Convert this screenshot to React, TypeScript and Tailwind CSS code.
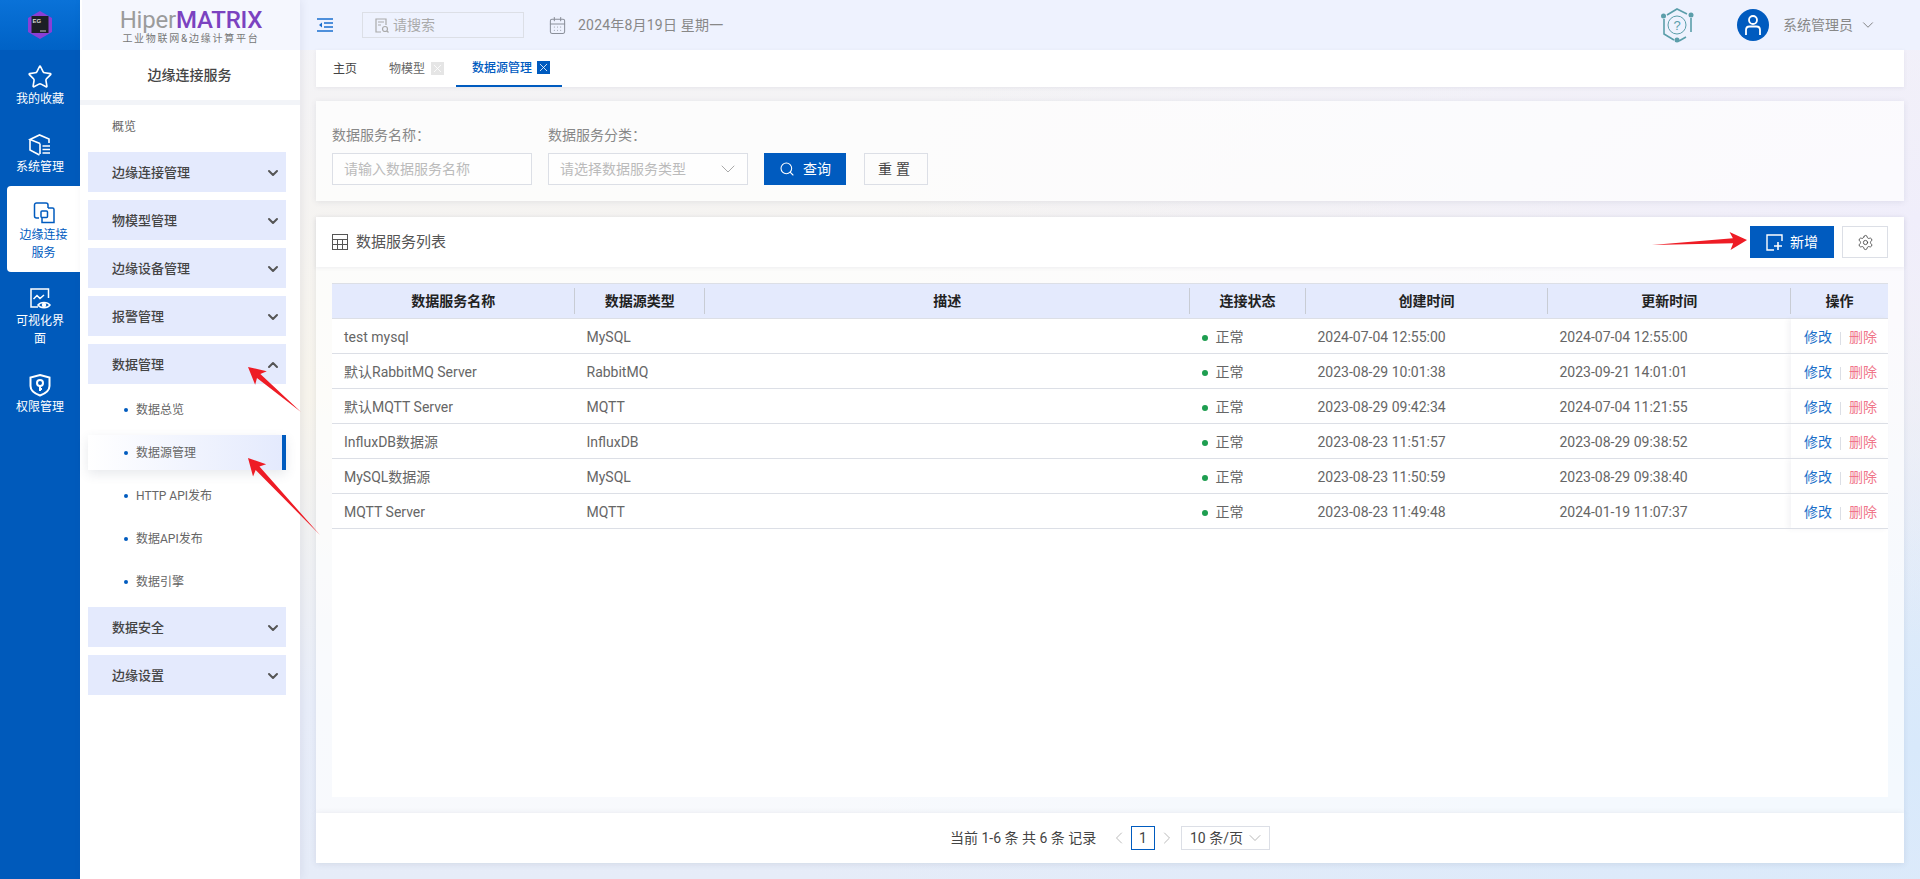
import { CalendarDays, ChevronDown, ChevronLeft, ChevronRight, ChevronUp, Search, Settings, Star, X } from "lucide-react";

const railItems = [
  { label: "我的收藏", icon: "star" },
  { label: "系统管理", icon: "box" },
  { label: "边缘连接服务", icon: "edge", active: true },
  { label: "可视化界面", icon: "screen" },
  { label: "权限管理", icon: "shield" },
];

const dataChildren = ["数据总览", "数据源管理", "HTTP API发布", "数据API发布", "数据引擎"];

const rows = [
  { name: "test mysql", type: "MySQL", created: "2024-07-04 12:55:00", updated: "2024-07-04 12:55:00" },
  { name: "默认RabbitMQ Server", type: "RabbitMQ", created: "2023-08-29 10:01:38", updated: "2023-09-21 14:01:01" },
  { name: "默认MQTT Server", type: "MQTT", created: "2023-08-29 09:42:34", updated: "2024-07-04 11:21:55" },
  { name: "InfluxDB数据源", type: "InfluxDB", created: "2023-08-23 11:51:57", updated: "2023-08-29 09:38:52" },
  { name: "MySQL数据源", type: "MySQL", created: "2023-08-23 11:50:59", updated: "2023-08-29 09:38:40" },
  { name: "MQTT Server", type: "MQTT", created: "2023-08-23 11:49:48", updated: "2024-01-19 11:07:37" },
];

const heads = [
  { label: "数据服务名称", cls: "w-[242.5px]" },
  { label: "数据源类型", cls: "w-[130.5px]" },
  { label: "描述", cls: "w-[484.5px]" },
  { label: "连接状态", cls: "w-[116px]" },
  { label: "创建时间", cls: "w-[242px]" },
  { label: "更新时间", cls: "w-[243.5px]" },
];

function RailIcon({ name }: { name: string }) {
  if (name === "star") return <Star size={26} strokeWidth={1.5} />;
  if (name === "box")
    return (
      <svg width="24" height="24" viewBox="0 0 24 24" fill="none" stroke="currentColor" strokeWidth="1.6">
        <path d="M12 10.5 2 6.5 11.5 2 21 6v4" />
        <path d="M2 6.5V17l9.5 5" />
        <path d="M12 10.5V21" />
        <path d="M14.5 13H22M14.5 16.5H22M14.5 20H22" />
      </svg>
    );
  if (name === "edge")
    return (
      <svg width="24" height="24" viewBox="0 0 24 24" fill="none" stroke="currentColor" strokeWidth="1.5">
        <path d="M7 17H4.5A2 2 0 0 1 2.5 15V4A2 2 0 0 1 4.5 2H14A2 2 0 0 1 16 4V7" />
        <path d="M16 7h4.5A1.5 1.5 0 0 1 22 8.500V21.500H10V17" />
        <rect x="9" y="10" width="6.500" height="6.500" rx="1" />
      </svg>
    );
  if (name === "screen")
    return (
      <svg width="24" height="24" viewBox="0 0 24 24" fill="none" stroke="currentColor" strokeWidth="1.5">
        <path d="M10 20H3V2h17.500v9" />
        <path d="M5.500 12 9 8.500l3 3 4-3.500" />
        <path d="M10 18c2.500-3.500 9.500-3.500 12 0-2.500 3.500-9.500 3.500-12 0Z" />
        <circle cx="16" cy="18" r="1.500" fill="currentColor" />
      </svg>
    );
  return (
    <svg width="24" height="24" viewBox="0 0 24 24" fill="none" stroke="currentColor" strokeWidth="2">
      <path d="M12 2 21.500 4.500V13c0 4.500-4 7.500-9.500 9.500C6.500 20.500 2.500 17.500 2.500 13V4.500Z" />
      <circle cx="12" cy="10" r="3" />
      <path d="M12 13v5M12 16h2" />
    </svg>
  );
}

function Rail() {
  return (
    <aside className="w-20 shrink-0 bg-[#005abb] flex flex-col">
      <div className="h-[50px] bg-gradient-to-b from-[#0a72d8] to-[#0062c6] flex items-center justify-center">
        <svg width="26" height="28" viewBox="0 0 26 28">
          <path d="M13 0 25 7v14l-12 7-12-7V7Z" fill="#8a3fd6" />
          <rect x="4.500" y="5" width="17" height="17" fill="#1c1f26" />
          <text x="5.500" y="12" fontSize="6" fontWeight="700" fill="#d8d8d8" fontFamily="Liberation Sans">EG</text>
          <rect x="13" y="19.500" width="6" height="1" fill="#c8c8c8" />
        </svg>
      </div>
      {railItems.map((item) => (
        <div
          key={item.label}
          className={`flex flex-col items-center pt-[15px] pb-[10px] text-xs leading-[18px] text-center ${
            item.active ? "ml-[7px] bg-white text-[#005bbf] rounded-l-[4px] px-[9px]" : "text-white px-4"
          }`}
        >
          <div className="h-6 flex items-center justify-center">
            <RailIcon name={item.icon} />
          </div>
          <span className="mt-[1px]">{item.label}</span>
        </div>
      ))}
    </aside>
  );
}

function MenuHead({ label, open }: { label: string; open?: boolean }) {
  return (
    <div className="h-10 shrink-0 bg-[#e4eafd] flex items-center justify-between pl-6 pr-[5px] pt-[1px] text-[13px] font-medium text-[#444]">
      <span>{label}</span>
      {open ? <ChevronUp size={16} strokeWidth={3} className="text-[#555]" /> : <ChevronDown size={16} strokeWidth={3} className="text-[#555]" />}
    </div>
  );
}

function Sidebar() {
  return (
    <aside className="w-[220px] shrink-0 bg-white flex flex-col shadow-[2px_0_8px_rgba(60,70,100,0.08)] z-10">
      <div className="h-[50px] bg-[#f5f7fe] flex flex-col items-center justify-center ml-[2px]">
        <div className="text-[24px] leading-[26px] tracking-[-0.2px] mt-[1px]">
          <span className="text-[#9b9b9b]">Hiper</span>
          <span className="text-[#7b42c0] font-medium">MATRIX</span>
        </div>
        <div className="text-[10px] leading-[12px] tracking-[1.75px] text-[#777]">工业物联网&边缘计算平台</div>
      </div>
      <div className="h-[50px] flex items-center justify-center text-sm font-medium text-[#444] ml-[-1px]">边缘连接服务</div>
      <div className="h-[5px] bg-[#f2f4f8]" />
      <div className="flex flex-col gap-2 pl-2 pr-[14px]">
        <div className="h-10 -mb-[3px] mt-[2px] flex items-center pl-6 text-xs text-[#666]">概览</div>
        <MenuHead label="边缘连接管理" />
        <MenuHead label="物模型管理" />
        <MenuHead label="边缘设备管理" />
        <MenuHead label="报警管理" />
        <MenuHead label="数据管理" open />
        {dataChildren.map((c, idx) => (
          <div
            key={c}
            className={`h-[35px] flex items-center pl-9 pt-[1px] text-xs text-[#666] ${
              idx === 1
                ? "bg-gradient-to-r from-white to-[#e4eafd] border-r-4 border-[#005bbf] shadow-[0_4px_12px_rgba(60,70,100,0.12)] text-[#555]"
                : ""
            }`}
          >
            <span className="w-1 h-1 rounded-full bg-[#005bbf] mr-[8px]" />
            {c}
          </div>
        ))}
        <MenuHead label="数据安全" />
        <MenuHead label="边缘设置" />
      </div>
    </aside>
  );
}

function Topbar() {
  return (
    <header className="h-[50px] shrink-0 bg-[#eef2fe] flex items-center pl-[17px] pr-[43px]">
      <svg width="16" height="14" viewBox="0 0 16 14" fill="none" stroke="#1a6fd0" strokeWidth="1.3">
        <path d="M0 1h16M7 5h9M7 9h9M0 13h16" />
        <path d="M5 4.500 2 7l3 2.500Z" fill="#1a6fd0" stroke="none" />
      </svg>
      <div className="ml-[29px] w-[162px] h-[26px] border border-[#dcdfe6] flex items-center pl-[12px] text-sm text-[#aaa]">
        <svg width="14" height="15" viewBox="0 0 14 15" fill="none" stroke="#aaa" strokeWidth="1.2" className="mr-[4px]">
          <path d="M6 14H1V1h10v6" />
          <path d="M3 4h6M3 7h3" />
          <circle cx="10" cy="11" r="2.500" />
          <path d="m12 13 1.500 1.500" />
        </svg>
        请搜索
      </div>
      <CalendarDays size={19} strokeWidth={1.3} className="ml-[24px] text-[#8a8f99]" />
      <span className="ml-[11px] text-sm text-[#888] tracking-[0.2px]">2024年8月19日 星期一</span>
      <svg width="34" height="36" viewBox="0 0 34 36" fill="none" stroke="#5b9eaa" strokeWidth="1.6" className="ml-auto">
        <path d="M7 8 17 2l10 5M31 11v14M26 30l-7 4M14 33 4 27V12" />
        <circle cx="17" cy="18" r="9" strokeWidth="1" />
        <circle cx="3.500" cy="9" r="2.500" fill="#5b9eaa" stroke="none" />
        <circle cx="31" cy="8" r="2.500" fill="#5b9eaa" stroke="none" />
        <circle cx="17" cy="33" r="2.500" fill="#5b9eaa" stroke="none" />
        <text x="17" y="23" fontSize="13" textAnchor="middle" fill="#5b9eaa" stroke="none" fontFamily="Liberation Sans">?</text>
      </svg>
      <div className="ml-[43px] w-8 h-8 rounded-full bg-[#005bbf] flex items-center justify-center">
        <svg width="20" height="24" viewBox="0 0 20 24" fill="none" stroke="white" strokeWidth="1.8">
          <circle cx="10" cy="7" r="4" />
          <path d="M3 22v-5c0-2 1.500-3.500 3.500-3.500h7c2 0 3.500 1.500 3.500 3.500v5" />
        </svg>
      </div>
      <span className="ml-[14px] text-sm text-[#888] w-[70px] whitespace-nowrap">系统管理员</span>
      <ChevronDown size={18} strokeWidth={1.2} className="ml-[6px] text-[#777]" />
    </header>
  );
}

function Tabs() {
  return (
    <div className="h-[37px] shrink-0 bg-white flex items-center text-xs shadow-[0_1px_4px_rgba(60,70,100,0.08)]">
      <span className="ml-[17px] text-[#444]">主页</span>
      <span className="ml-[32px] text-[#666]">物模型</span>
      <span className="ml-[6px] w-[13px] h-[13px] bg-[#e5e5e5] text-white flex items-center justify-center">
        <X size={15} strokeWidth={1.5} />
      </span>
      <div className="ml-[12px] h-[37px] w-[106px] border-b-2 border-[#005bbf] flex items-center pl-4 text-[#005bbf] font-medium">
        数据源管理
        <span className="ml-[5px] w-[13px] h-[13px] bg-[#005bbf] text-white flex items-center justify-center">
          <X size={15} strokeWidth={1.5} />
        </span>
      </div>
    </div>
  );
}

function Filters() {
  return (
    <section className="h-[100px] shrink-0 mt-[14px] bg-white/70 px-4 flex items-end pb-[16px] shadow-[0_1px_6px_rgba(60,70,100,0.1)]">
      <div className="w-[200px] text-sm text-[#888]">
        <div className="h-[20px] leading-[20px] mb-[8px]">数据服务名称：</div>
        <div className="h-8 border border-[#dcdfe6] bg-white/60 flex items-center pl-[11px] text-[#bbb]">请输入数据服务名称</div>
      </div>
      <div className="w-[200px] ml-4 text-sm text-[#888]">
        <div className="h-[20px] leading-[20px] mb-[8px]">数据服务分类：</div>
        <div className="h-8 border border-[#dcdfe6] bg-white/60 flex items-center justify-between pl-[11px] pr-[7px] text-[#bbb]">
          请选择数据服务类型
          <ChevronDown size={24} strokeWidth={1} className="text-[#aaa]" />
        </div>
      </div>
      <button className="ml-4 w-[82px] h-8 bg-[#005bbf] text-white text-sm flex items-center justify-center gap-[8px]">
        <Search size={16} strokeWidth={1.6} />
        查询
      </button>
      <button className="ml-[18px] w-16 h-8 border border-[#dcdfe6] text-[#444] text-sm tracking-[4px]">重置</button>
    </section>
  );
}

function DataTable() {
  return (
    <table className="w-full table-fixed border-collapse text-sm text-[#666]">
      <thead>
        <tr className="h-[35px] bg-[#e4eafd] border-y border-[#dcdfe6]">
          {heads.map((h, idx) => (
            <th
              key={h.label}
              className={`${h.cls} relative font-semibold text-sm text-[#222] ${
                idx < 6 ? "after:absolute after:right-0 after:top-[4px] after:bottom-[4px] after:w-px after:bg-[#c8ccd4]" : ""
              }`}
            >
              {h.label}
            </th>
          ))}
          <th className="font-semibold text-sm text-[#222]">操作</th>
        </tr>
      </thead>
      <tbody>
        {rows.map((r) => (
          <tr key={r.name} className="h-[35px] border-b border-[#dcdfe6] bg-white">
            <td className="px-3 pt-[2px] whitespace-nowrap">{r.name}</td>
            <td className="px-3 pt-[2px]">{r.type}</td>
            <td className="px-3" />
            <td className="px-3 pt-[2px]">
              <span className="inline-block w-[6px] h-[6px] rounded-full bg-[#1e9e50] mr-2 align-middle" />
              正常
            </td>
            <td className="px-3 pt-[2px] whitespace-nowrap">{r.created}</td>
            <td className="px-3 pt-[2px] whitespace-nowrap">{r.updated}</td>
            <td className="pl-[13px] pt-[2px] whitespace-nowrap shadow-[-3px_0_5px_rgba(60,70,100,0.06)]">
              <span className="text-[#1a6fc9]">修改</span>
              <span className="inline-block w-px h-[13px] bg-[#dcdfe6] mx-2 align-middle" />
              <span className="text-[#f0758a]">删除</span>
            </td>
          </tr>
        ))}
      </tbody>
    </table>
  );
}

function ListCard() {
  return (
    <section className="flex-1 mt-4 bg-white/70 flex flex-col shadow-[0_1px_6px_rgba(60,70,100,0.1)] min-h-0">
      <div className="h-[50px] shrink-0 bg-white flex items-center pl-4 pr-4 shadow-[0_1px_4px_rgba(60,70,100,0.08)]">
        <svg width="16" height="16" viewBox="0 0 16 16" fill="none" stroke="#555" strokeWidth="1">
          <rect x="0.500" y="0.500" width="15" height="15" />
          <path d="M0 5.500h16M0 10.500h16M5.500 5.500V16M10.500 5.500V16" />
        </svg>
        <span className="ml-2 pt-[1px] text-[15px] text-[#555]">数据服务列表</span>
        <button className="ml-auto w-[84px] h-8 bg-[#005bbf] text-white text-sm flex items-center justify-center gap-[7px]">
          <svg width="17" height="17" viewBox="0 0 17 17" fill="none" stroke="white" strokeWidth="1.4">
            <path d="M8 16H1V1h15v6" />
            <path d="M12 8v8M8 12h8" strokeWidth="1.6" />
          </svg>
          新增
        </button>
        <button className="ml-2 w-[46px] h-8 border border-[#dcdfe6] text-[#444] flex items-center justify-center">
          <Settings size={17} strokeWidth={1.2} />
        </button>
      </div>
      <div className="flex-1 mx-4 mt-4 mb-4 bg-white">
        <DataTable />
      </div>
    </section>
  );
}

function Pager() {
  return (
    <div className="h-[50px] shrink-0 mb-4 bg-white flex items-center text-sm text-[#444] pl-[634px] shadow-[0_1px_6px_rgba(60,70,100,0.12)]">
      <span className="w-[149px] whitespace-nowrap">当前 1-6 条 共 6 条 记录</span>
      <ChevronLeft size={20} strokeWidth={1.2} className="ml-[10px] text-[#bbb]" />
      <span className="ml-[2px] w-6 h-6 border border-[#005bbf] flex items-center justify-center">1</span>
      <ChevronRight size={20} strokeWidth={1.2} className="ml-[2px] text-[#bbb]" />
      <div className="ml-[4px] w-[89px] h-6 border border-[#dcdfe6] flex items-center justify-between pl-2 pr-[4px]">
        10 条/页
        <ChevronDown size={20} strokeWidth={1} className="text-[#aaa]" />
      </div>
    </div>
  );
}

// red annotation arrows drawn over the screenshot
function arrowPoints(tail: number[], tip: number[]) {
  const dx = tip[0] - tail[0];
  const dy = tip[1] - tail[1];
  const len = Math.hypot(dx, dy);
  const ux = dx / len;
  const uy = dy / len;
  const at = (back: number, side: number) =>
    `${tip[0] - ux * back - uy * side},${tip[1] - uy * back + ux * side}`;
  return [`${tail[0]},${tail[1]}`, at(14, 2.6), at(17, 9), tip.join(","), at(17, -9), at(14, -2.6)].join(" ");
}

const arrows = [
  { tail: [301, 412], tip: [248, 367] },
  { tail: [320, 535], tip: [248, 458] },
  { tail: [1652, 245], tip: [1747, 240] },
];

export default function App() {
  return (
    <div className="relative h-screen w-full flex overflow-hidden font-['Roboto','Noto_Sans_CJK_SC',sans-serif] bg-[linear-gradient(180deg,#f3f3f8_0%,#f7f4ec_45%,#e8edf9_80%,#e6ecf8_100%)]">
      <Rail />
      <Sidebar />
      <div className="flex-1 min-w-0 flex flex-col bg-[radial-gradient(ellipse_at_100%_25%,#f0eefb_0%,transparent_45%),radial-gradient(ellipse_at_100%_85%,#d8e9fb_0%,transparent_50%)]">
        <Topbar />
        <main className="flex-1 min-h-0 flex flex-col px-4">
          <Tabs />
          <Filters />
          <ListCard />
          <Pager />
        </main>
      </div>
      <svg className="absolute inset-0 z-20 pointer-events-none" width="1920" height="879">
        {arrows.map((a, idx) => (
          <polygon key={idx} points={arrowPoints(a.tail, a.tip)} fill="#ee1c25" />
        ))}
      </svg>
    </div>
  );
}
